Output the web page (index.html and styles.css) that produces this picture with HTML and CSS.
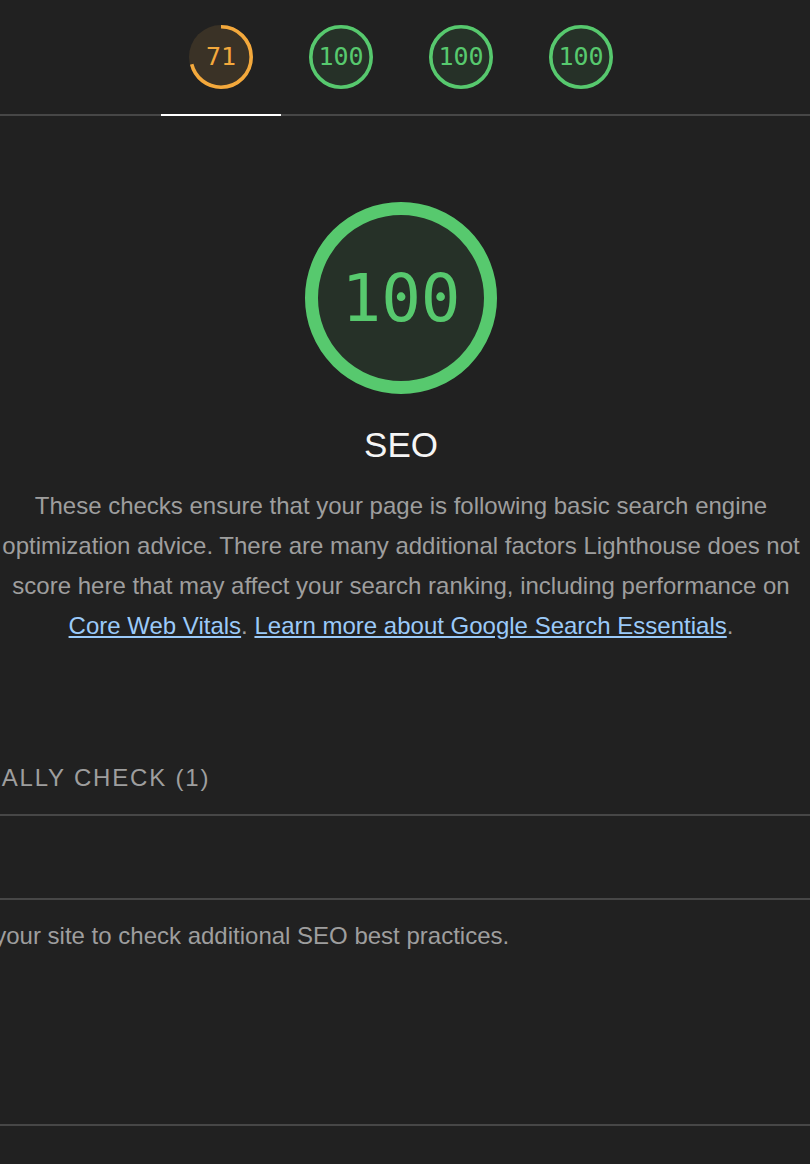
FILE: index.html
```html
<!DOCTYPE html>
<html lang="en">
<head>
<meta charset="utf-8">
<title>Lighthouse SEO</title>
<link rel="stylesheet" href="styles.css">
</head>
<body>
<div class="page">
  <nav class="tabs">
    <div class="tab active">
      <svg class="mini-gauge" viewBox="0 0 64 64" width="64" height="64">
        <circle class="bg avg-bg" cx="32" cy="32" r="32"/>
        <circle class="arc avg-arc" cx="32" cy="32" r="30.2" stroke-dasharray="134.7 200" transform="rotate(-90 32 32)"/>
      </svg>
      <span class="mini-label avg">71</span>
    </div>
    <div class="tab">
      <svg class="mini-gauge" viewBox="0 0 64 64" width="64" height="64">
        <circle class="bg pass-bg" cx="32" cy="32" r="32"/>
        <circle class="arc pass-arc" cx="32" cy="32" r="30.2"/>
      </svg>
      <span class="mini-label pass">100</span>
    </div>
    <div class="tab">
      <svg class="mini-gauge" viewBox="0 0 64 64" width="64" height="64">
        <circle class="bg pass-bg" cx="32" cy="32" r="32"/>
        <circle class="arc pass-arc" cx="32" cy="32" r="30.2"/>
      </svg>
      <span class="mini-label pass">100</span>
    </div>
    <div class="tab">
      <svg class="mini-gauge" viewBox="0 0 64 64" width="64" height="64">
        <circle class="bg pass-bg" cx="32" cy="32" r="32"/>
        <circle class="arc pass-arc" cx="32" cy="32" r="30.2"/>
      </svg>
      <span class="mini-label pass">100</span>
    </div>
  </nav>

  <section class="category">
    <div class="big-gauge">
      <svg viewBox="0 0 192 192" width="192" height="192">
        <circle class="bg pass-bg" cx="96" cy="96" r="96"/>
        <circle class="big-arc" cx="96" cy="96" r="89.5"/>
      </svg>
      <span class="big-label">100</span>
    </div>
    <h1 class="cat-title">SEO</h1>
    <p class="cat-desc">These checks ensure that your page is following basic search engine optimization advice. There are many additional factors Lighthouse does not score here that may affect your search ranking, including performance on <a href="#">Core Web Vitals</a>. <a href="#">Learn more about Google Search Essentials</a>.</p>
  </section>

  <section class="clump">
    <div class="clump-title">Additional items to manually check (1)</div>
    <div class="clump-row"></div>
    <p class="clump-desc">Run these additional validators on your site to check additional SEO best practices.</p>
  </section>
</div>
</body>
</html>
```
FILE: styles.css
```css
html, body {
  margin: 0;
  padding: 0;
  background: #212121;
  overflow: hidden;
  height: 1164px;
}
.page {
  width: 1522px;
  margin-left: -360px;
  font-family: "Liberation Sans", Arial, sans-serif;
}
.tabs {
  display: flex;
  justify-content: center;
  padding-top: 25px;
  border-bottom: 2px solid #474747;
  height: 89px;
  box-sizing: content-box;
}
.tab {
  width: 120px;
  height: 89px;
  position: relative;
  display: flex;
  justify-content: center;
  box-sizing: border-box;
}
.tab.active {
  border-bottom: 2px solid #ffffff;
  height: 91px;
  margin-bottom: -2px;
}
.mini-gauge {
  display: block;
}
.mini-label {
  position: absolute;
  top: 0;
  left: 0;
  width: 120px;
  height: 64px;
  line-height: 64px;
  text-align: center;
  font-family: "DejaVu Sans Mono", monospace;
  font-size: 25px;
}
.bg.pass-bg { fill: #263128; }
.bg.avg-bg { fill: #3a3226; }
.arc {
  fill: none;
  stroke-width: 3.6;
}
.pass-arc { stroke: #57c96e; }
.avg-arc { stroke: #f4a93c; stroke-linecap: butt; }
.pass { color: #57c96e; }
.avg { color: #f4a93c; }

.category {
  display: flex;
  flex-direction: column;
  align-items: center;
  padding-top: 86px;
}
.big-gauge {
  position: relative;
  width: 192px;
  height: 192px;
}
.big-gauge svg { display: block; }
.big-arc {
  fill: none;
  stroke: #57c96e;
  stroke-width: 13;
}
.big-label {
  position: absolute;
  inset: 0;
  display: flex;
  align-items: center;
  justify-content: center;
  font-family: "DejaVu Sans Mono", monospace;
  font-size: 66px;
  color: #57c96e;
}
.cat-title {
  margin: 31px 0 0;
  font-size: 35px;
  line-height: 40px;
  font-weight: normal;
  color: #f5f5f5;
}
.cat-desc {
  margin: 21px 0 0;
  width: 806px;
  text-align: center;
  font-size: 24px;
  line-height: 40px;
  color: #9e9e9e;
}
.cat-desc a {
  color: #9bcaf9;
  text-decoration: underline;
}
.clump {
  margin-top: 116px;
}
.clump-title {
  text-transform: uppercase;
  font-size: 24px;
  line-height: 30px;
  letter-spacing: 1.8px;
  text-indent: -21px;
  color: #9e9e9e;
  padding-top: 1px;
  padding-bottom: 21px;
  border-bottom: 2px solid #474747;
}
.clump-row {
  height: 82px;
  border-bottom: 2px solid #474747;
}
.clump-desc {
  margin: 0;
  padding: 21px 0 173px;
  font-size: 24px;
  line-height: 30px;
  text-indent: -14px;
  color: #9e9e9e;
  border-bottom: 2px solid #474747;
}
```
